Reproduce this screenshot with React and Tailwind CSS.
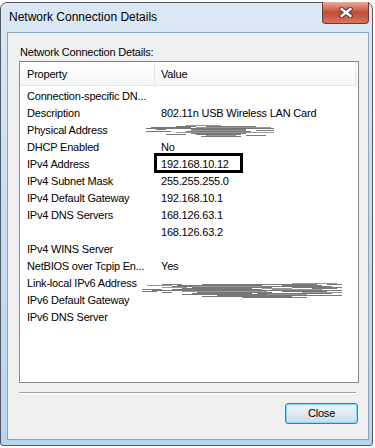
import React from 'react'

const rows = [
  { name: 'Connection-specific DN...', value: '' },
  { name: 'Description', value: '802.11n USB Wireless LAN Card' },
  { name: 'Physical Address', value: '' },
  { name: 'DHCP Enabled', value: 'No' },
  { name: 'IPv4 Address', value: '192.168.10.12' },
  { name: 'IPv4 Subnet Mask', value: '255.255.255.0' },
  { name: 'IPv4 Default Gateway', value: '192.168.10.1' },
  { name: 'IPv4 DNS Servers', value: '168.126.63.1' },
  { name: '', value: '168.126.63.2' },
  { name: 'IPv4 WINS Server', value: '' },
  { name: 'NetBIOS over Tcpip En...', value: 'Yes' },
  { name: 'Link-local IPv6 Address', value: '' },
  { name: 'IPv6 Default Gateway', value: '' },
  { name: 'IPv6 DNS Server', value: '' },
]

// horizontal scribble strokes: [y, x1, x2]
const scribbleA = [
  [0, 40, 75], [1, 30, 50], [1, 60, 110], [2, 5, 45], [2, 50, 125], [3, 0, 128],
  [4, 10, 20], [4, 45, 100], [5, 45, 100], [5, 110, 128], [6, 0, 25], [6, 40, 105],
  [7, 30, 128], [8, 45, 100], [9, 20, 40], [9, 50, 95], [10, 60, 90], [10, 100, 120],
  [11, 55, 95], [3, 45, 100], [7, 45, 100],
]

const scribbleB = [
  [0, 150, 195], [1, 20, 40], [1, 60, 175], [1, 185, 200], [2, 5, 30], [2, 35, 120],
  [2, 140, 180], [3, 30, 190], [4, 20, 45], [4, 50, 130], [4, 150, 200], [5, 40, 110],
  [5, 120, 150], [5, 170, 195], [6, 0, 20], [6, 30, 120], [6, 130, 180], [7, 10, 60],
  [7, 65, 200], [8, 0, 15], [8, 40, 125], [8, 140, 185], [9, 20, 30], [9, 55, 130],
  [9, 160, 200], [10, 50, 110], [10, 115, 190], [11, 40, 75], [11, 90, 165],
  [12, 75, 200], [13, 60, 150], [14, 100, 165], [3, 50, 120], [7, 50, 125], [11, 55, 125],
]

const Scribble = ({ lines, w, h, className }) => (
  <svg className={className} width={w} height={h} viewBox={`0 0 ${w} ${h}`} shapeRendering="crispEdges">
    {lines.map(([y, x1, x2], i) => (
      <rect key={i} x={x1} y={y} width={x2 - x1} height="1" fill={i % 4 === 0 ? '#979797' : '#777777'} />
    ))}
  </svg>
)

const App = () => {
  return (
    <div className="w-[375px] h-[448px] bg-white pt-[2px] font-['Liberation_Sans',Arial,sans-serif] text-black">
      <div className="w-[373px] h-[444px] rounded-t-[7px] rounded-b-[3px] border border-[#4f5864] bg-gradient-to-b from-[#dce8f5] via-[#c8dcf1] to-[#b9d4ef] flex flex-col">
        {/* title bar */}
        <div className="h-[29px] flex items-start">
          <span className="ml-[8px] mt-[7px] text-[12px] leading-[15px]">Network Connection Details</span>
          <div className="ml-auto mr-[3px] mt-[-1px] w-[47px] h-[22px] rounded-b-[4px] border border-t-0 border-[#6e3b33] bg-gradient-to-b from-[#e9aa98] via-[#c54a33] to-[#d9735c] flex items-center justify-center">
            <svg width="14" height="11" viewBox="0 0 14 11">
              <path d="M2.5 2 L11.5 9 M11.5 2 L2.5 9" stroke="#3b3b3b" strokeWidth="4.5" strokeLinecap="round" />
              <path d="M2.5 2 L11.5 9 M11.5 2 L2.5 9" stroke="#ffffff" strokeWidth="2.6" strokeLinecap="round" />
            </svg>
          </div>
        </div>

        {/* client area */}
        <div className="ml-[6px] w-[362px] h-[408px] border border-[#8fa3ba] bg-[#f0f0f0] flex flex-col text-[11px] tracking-[-0.2px]">
          <div className="ml-[12px] mt-[11px] h-[17px] leading-[17px]">Network Connection Details:</div>

          <div className="relative ml-[11px] w-[340px] h-[322px] border border-[#828790] bg-white">
            {/* header */}
            <div className="grid grid-cols-[135px_1fr] h-[24px] bg-gradient-to-b from-white to-[#f4f6f8] border-b border-[#e4e7eb]">
              <div className="pl-[7px] leading-[24px] border-r border-[#e3e6ea]">Property</div>
              <div className="pl-[6px] leading-[24px] mr-[2px] border-r border-[#e3e6ea]">Value</div>
            </div>

            <div className="pt-[2px]">
              {rows.map((row, i) => (
                <div key={i} className="grid grid-cols-[135px_1fr] h-[17px] leading-[17px]">
                  <div className="pl-[7px] whitespace-nowrap overflow-hidden">{row.name}</div>
                  <div className="pl-[6px] whitespace-nowrap">{row.value}</div>
                </div>
              ))}
            </div>

            {/* annotations drawn over the list */}
            <div className="absolute left-[134px] top-[91px] w-[89px] h-[20px] border-[3px] border-black" />
            <Scribble lines={scribbleA} w={128} h={13} className="absolute left-[126px] top-[63px]" />
            <Scribble lines={scribbleB} w={202} h={17} className="absolute left-[122px] top-[221px]" />
          </div>

          <div className="ml-[11px] mt-[9px] w-[337px] h-[2px] border-t border-[#a0a0a0] border-b border-b-white" />

          <div className="mt-[9px] ml-[277px] w-[73px] h-[21px] rounded-[3px] border border-[#3c7fb1] shadow-[inset_0_0_0_1px_#7fdcf9] bg-gradient-to-b from-[#f2f6f9] via-[#e0eaf1] to-[#cddbe6] flex items-center justify-center leading-[17px]">
            Close
          </div>
        </div>
      </div>
    </div>
  )
}

export default App
